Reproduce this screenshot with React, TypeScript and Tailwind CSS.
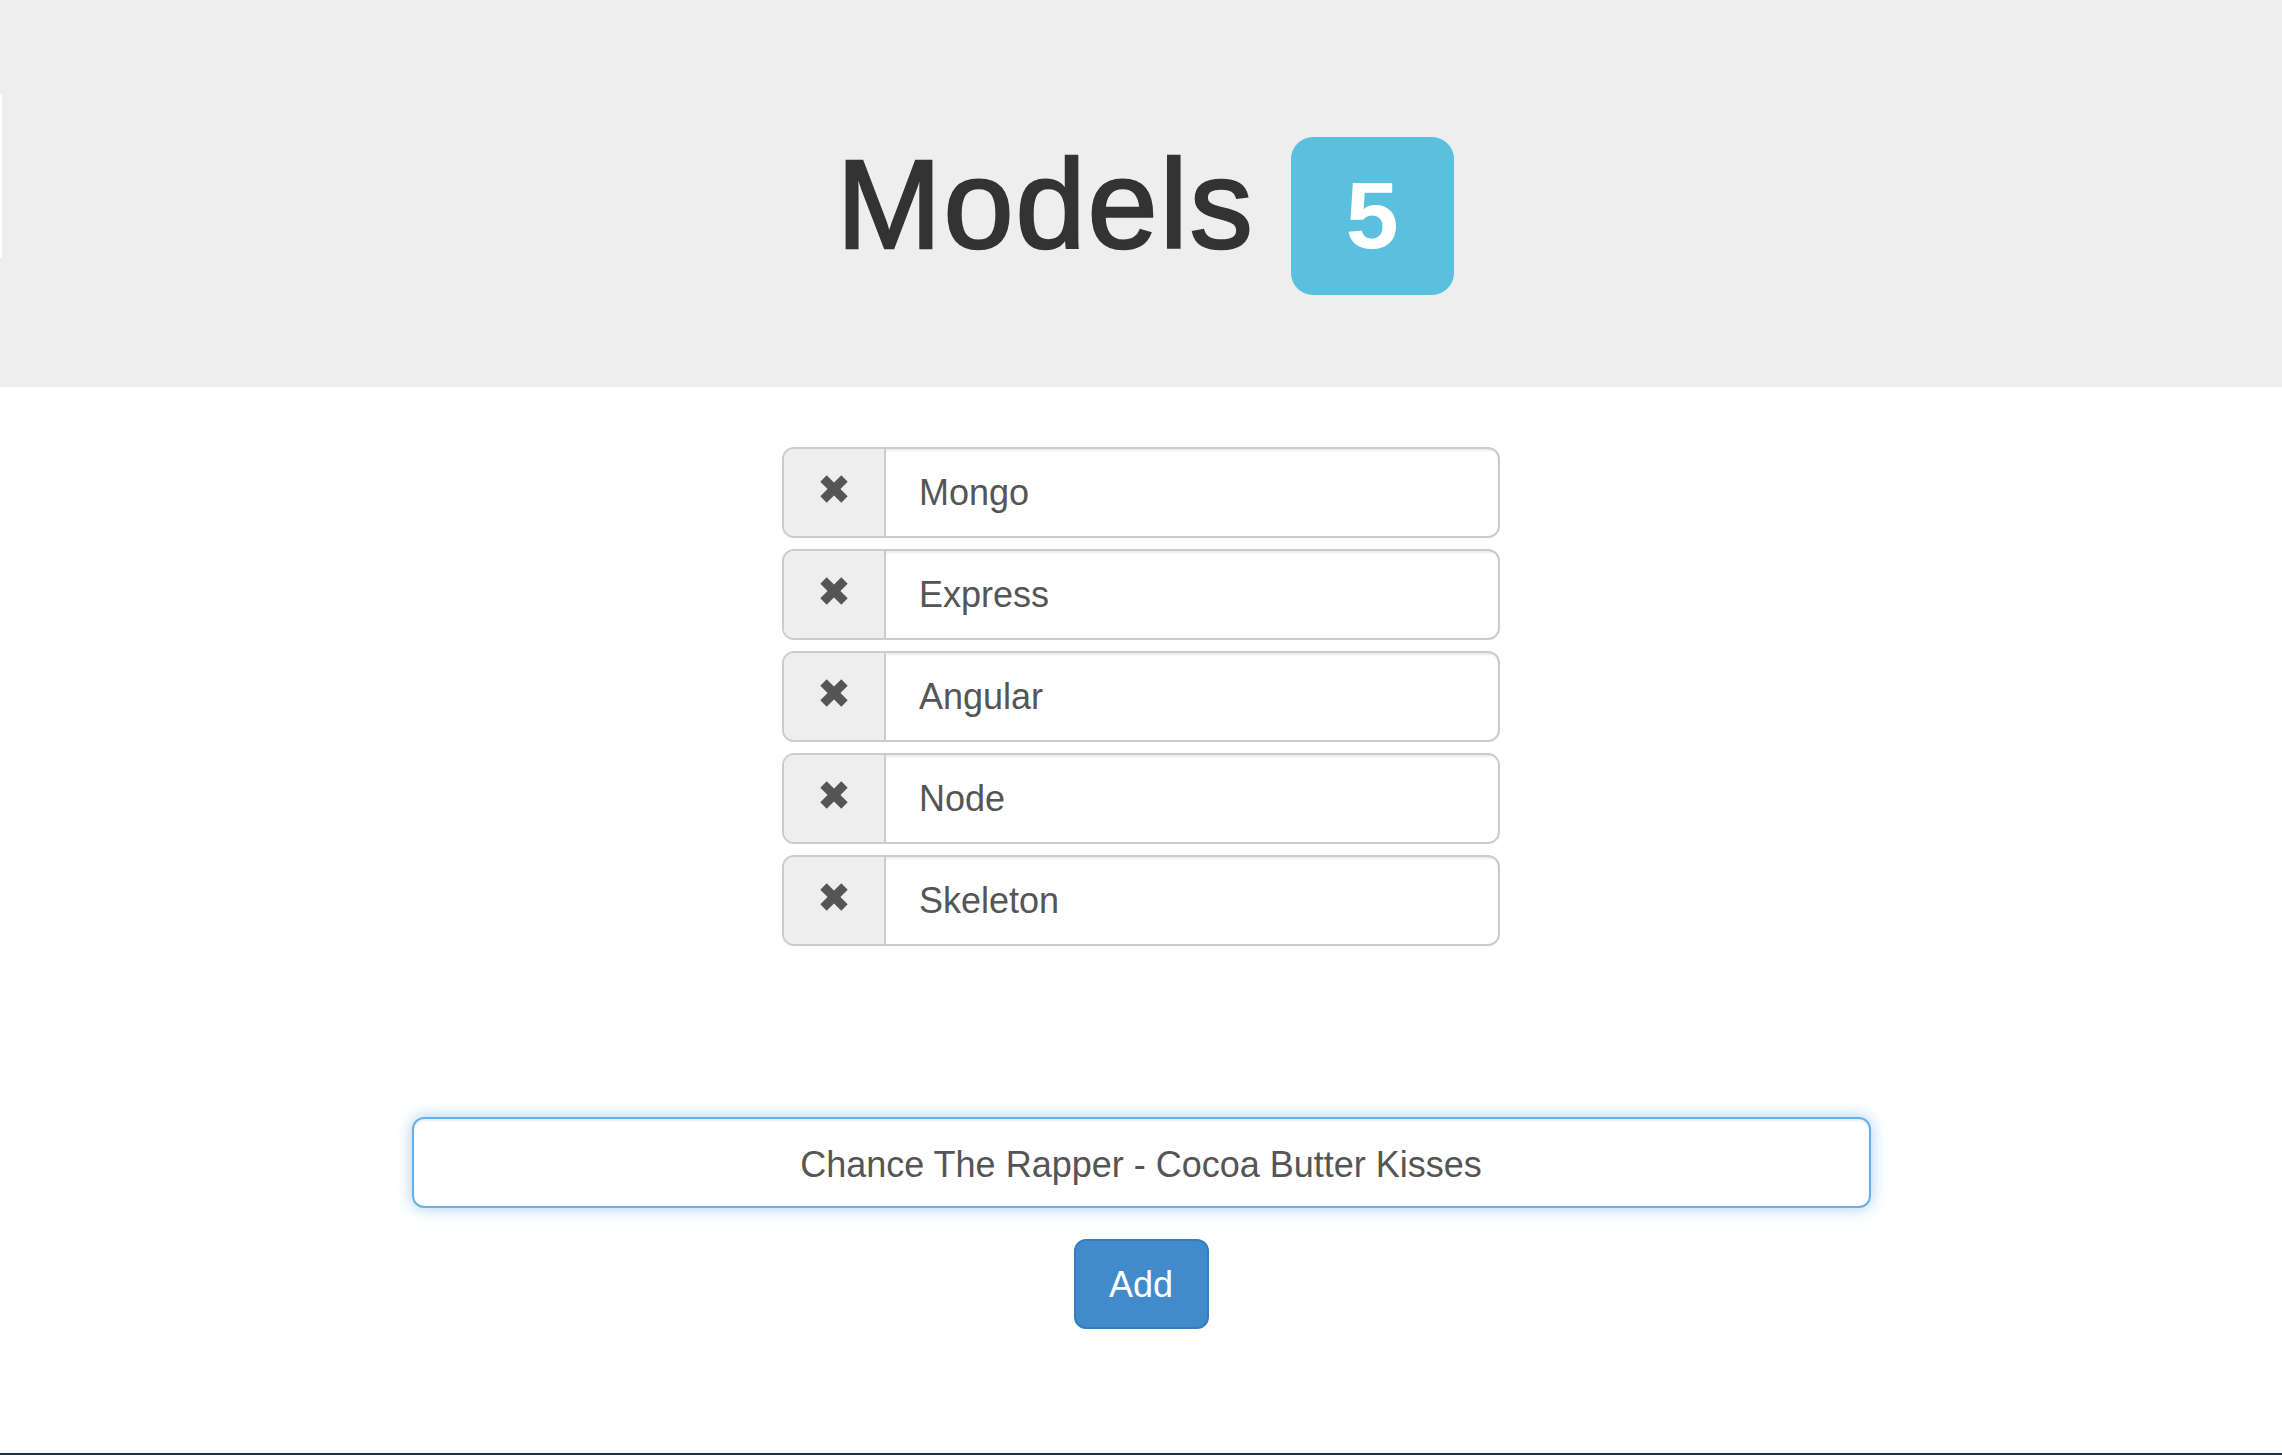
import React from "react";

const models = ["Mongo", "Express", "Angular", "Node", "Skeleton"];

const RemoveIcon = () => (
  <svg width="30" height="30" viewBox="0 0 30 30">
    <line x1="4.5" y1="4.5" x2="25.5" y2="25.5" stroke="#555555" strokeWidth="9" />
    <line x1="25.5" y1="4.5" x2="4.5" y2="25.5" stroke="#555555" strokeWidth="9" />
  </svg>
);

const App = () => {
  return (
    <div className="relative min-h-[1455px] flex flex-col bg-white font-['Liberation_Sans',Arial,sans-serif]">
      <div className="absolute left-0 top-[95px] w-[2px] h-[163px] bg-white"></div>
      <div className="h-[387px] bg-[#eeeeee] flex justify-center pt-[136px]">
        <div className="flex items-baseline pl-[8px]">
          <h1 className="text-[126px] leading-[1.1] text-[#333333] font-normal tracking-[2px] [-webkit-text-stroke:2.5px_#333333]">
            Models
          </h1>
          <span className="ml-[36px] inline-block bg-[#5bc0de] text-white font-bold text-[95px] leading-none pt-[31px] pb-[32px] px-[55px] rounded-[22px]">
            5
          </span>
        </div>
      </div>

      <div className="mt-[60px] w-[718px] mx-auto flex flex-col gap-[11px]">
        {models.map((model) => (
          <div
            key={model}
            className="h-[91px] flex border-2 border-[#cccccc] rounded-[12px] overflow-hidden"
          >
            <button className="w-[102px] shrink-0 bg-[#eeeeee] border-r-2 border-[#cccccc] flex items-center justify-center pb-[8px]">
              <RemoveIcon />
            </button>
            <div className="flex-1 flex items-center pl-[33px] text-[36px] text-[#555555] shadow-[inset_0_2px_2px_rgba(0,0,0,0.075)]">
              {model}
            </div>
          </div>
        ))}
      </div>

      <input
        className="mt-[171px] w-[1459px] mx-auto h-[91px] pt-[5px] border-2 border-[#66afe9] rounded-[12px] text-center text-[36px] text-[#555555] outline-none shadow-[inset_0_2px_2px_rgba(0,0,0,0.075),0_0_16px_rgba(102,175,233,0.6)]"
        defaultValue="Chance The Rapper - Cocoa Butter Kisses"
        readOnly
      />

      <button className="mt-[31px] mx-auto w-[135px] h-[90px] pt-[2px] bg-[#428bca] border-2 border-[#357ebd] rounded-[12px] text-white text-[36px]">
        Add
      </button>

      <div className="flex-1"></div>
      <div className="h-[2px] bg-[#1e2f3e]"></div>
    </div>
  );
};

export default App;
